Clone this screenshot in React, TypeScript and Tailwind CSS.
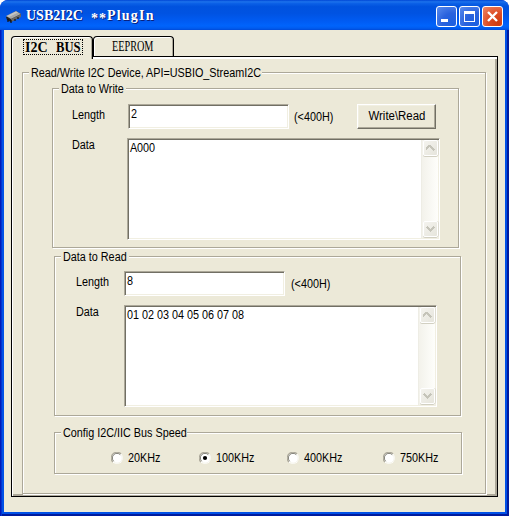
import type { ReactNode } from 'react'

const etched =
  'border border-[#aca899] shadow-[inset_1px_1px_0_#fff,1px_1px_0_#fff] flex flex-col items-start'

function Txt({ children, className = '' }: { children: ReactNode; className?: string }) {
  return (
    <span className={`block origin-left scale-x-90 whitespace-pre leading-[14px] ${className}`}>
      {children}
    </span>
  )
}

function Legend({ children, className }: { children: ReactNode; className: string }) {
  return (
    <div className={`relative -mt-[7px] ml-[6px] h-[14px] shrink-0 bg-[#ece9d8] pl-[2px] ${className}`}>
      <Txt>{children}</Txt>
    </div>
  )
}

const sunken =
  'bg-white border border-t-[#aca899] border-l-[#aca899] border-r-white border-b-white shadow-[inset_1px_1px_0_#716f64,inset_-1px_-1px_0_#f1efe2]'

function Field({ value }: { value: string }) {
  return (
    <div className={`h-[25px] w-[161px] shrink-0 pl-[2px] pt-[2px] ${sunken}`}>
      <Txt>{value}</Txt>
    </div>
  )
}

function ScrollButton({ up = false }: { up?: boolean }) {
  return (
    <div className="flex h-[16px] w-[15px] items-center justify-center rounded-[2px] border border-white bg-gradient-to-br from-[#f4f3ee] to-[#e6e5dc] shadow-[0_1px_0_#d2d0c2,1px_0_0_#dddbd0]">
      <svg width="9" height="6" viewBox="0 0 9 6" shapeRendering="crispEdges">
        <path
          d={up ? 'M4 0h1v1h1v1h1v1h1v1h1v1h-1v1h-1v-1h-1v-1h-1v-1h-1v-1h-1v1h-1v1h-1v1h-1v-1h-1v-1h1v-1h1v-1h1v-1h1z' : 'M1 0h1v1h1v1h1v1h1v-1h1v-1h1v-1h1v1h1v1h-1v1h-1v1h-1v1h-1v1h-1v-1h-1v-1h-1v-1h-1v-1h-1v-1h1z'}
          fill="#c5c4b9"
        />
      </svg>
    </div>
  )
}

function TextArea({ value, className }: { value: string; className: string }) {
  return (
    <div className={`flex w-[313px] shrink-0 justify-between p-px ${className} ${sunken}`}>
      <Txt className="pl-px pt-px">{value}</Txt>
      <div className="flex w-[17px] flex-col items-center justify-between border-l border-[#eeede5] bg-gradient-to-r from-[#f3f2eb] to-[#fefefb] pb-px">
        <ScrollButton up />
        <ScrollButton />
      </div>
    </div>
  )
}

function Radio({ label, checked = false, className = '' }: { label: string; checked?: boolean; className?: string }) {
  return (
    <div className={`flex shrink-0 ${className}`}>
      <svg className="mt-px" width="12" height="12" viewBox="0 0 12 12">
        <circle cx="6" cy="6" r="5.9" fill="#fff" />
        <path d="M1.9 10.1A5.6 5.6 0 0 1 10.1 1.9" fill="none" stroke="#aca899" strokeWidth="1.1" />
        <path d="M2.7 9.3A4.6 4.6 0 0 1 9.3 2.7" fill="none" stroke="#716f64" strokeWidth="0.9" />
        <path d="M9.7 2.7A4.9 4.9 0 0 1 2.7 9.7" fill="none" stroke="#f1efe2" strokeWidth="0.7" />
        {checked && <circle cx="6" cy="6" r="2.1" fill="#000" />}
      </svg>
      <Txt className="ml-[5px]">{label}</Txt>
    </div>
  )
}

const caption = 'flex h-[21px] w-[21px] items-center justify-center rounded-[3px] border border-white'

export default function App() {
  return (
    <div className="h-[516px] w-[509px] overflow-hidden bg-white font-['Liberation_Sans',Arial,sans-serif] text-[12px] text-black">
      <div className="flex h-full flex-col overflow-hidden rounded-t-[8px] bg-[#0831d9]">
        <div className="flex h-[30px] shrink-0 items-start bg-[linear-gradient(180deg,#0046d5_0%,#1c72ec_6%,#0a5fe6_12%,#0052de_22%,#0053e2_45%,#005cf4_72%,#0064fc_86%,#005cf0_94%,#004ad8_100%)] pl-[6px] pt-[6px]">
          <svg className="mt-[4px]" width="16" height="14" viewBox="0 0 16 14">
            <path d="M0 7L10 1L15 4V6L5 12L1 10Z" fill="#222" />
            <path d="M0 6L10 1L15 4L5 9Z" fill="#a8a8a8" />
            <path d="M1 6L10 1.5L12 2.5L3 7Z" fill="#c4c4c4" />
            <path d="M5 9L15 4V7L5 12Z" fill="#666" />
            <path d="M2 9v3M5 10v3M9 9v2M12 7v2" stroke="#111" strokeWidth="1.2" />
          </svg>
          <div className="ml-[4px] mt-[2px] flex font-['Liberation_Serif',serif] text-[14px] font-bold leading-[16px] text-white [text-shadow:1px_1px_0_#0a1f7a]">
            <span className="w-[65px]">USB2I2C</span>
            <span className="mt-[3px] w-[16px] tracking-[1px]">**</span>
            <span className="tracking-[1.2px]">PlugIn</span>
          </div>
          <div className="ml-auto mr-[6px] flex gap-[2px]">
            <div className={`${caption} bg-[radial-gradient(circle_at_80%_85%,#1c5fe0,#2a62dd_45%,#5a8cee)]`}>
              <svg width="19" height="19" viewBox="0 0 19 19"><path d="M4 12h7v3h-7z" fill="#fff" /></svg>
            </div>
            <div className={`${caption} bg-[radial-gradient(circle_at_80%_85%,#1c5fe0,#2a62dd_45%,#5a8cee)]`}>
              <svg width="19" height="19" viewBox="0 0 19 19" shapeRendering="crispEdges"><path d="M4 4h11v11h-11zM5 7v7h9v-7z" fill="#fff" fillRule="evenodd" /></svg>
            </div>
            <div className={`${caption} bg-[radial-gradient(circle_at_80%_85%,#d03c10,#dd4d25_45%,#ee8868)]`}>
              <svg width="19" height="19" viewBox="0 0 19 19"><path d="M5 5L14 14M14 5L5 14" stroke="#fff" strokeWidth="2.4" /></svg>
            </div>
          </div>
        </div>

        <div className="flex min-h-0 flex-1 bg-[#0050e6] px-[4px] pb-[4px] shadow-[inset_1px_0_0_#0019b8,inset_2px_0_0_#0034d0,inset_-2px_-2px_0_#001a9c]">
          <div className="flex flex-1 flex-col bg-[#ece9d8] pl-[7px] pt-[6px]">
            <div className="flex h-[20px] shrink-0 font-['Liberation_Serif',serif]">
              <div className="relative z-10 h-[23px] w-[82px] rounded-t-[4px] border border-b-0 border-black bg-[#ece9d8] pl-[11px] pt-[2px] shadow-[inset_1px_1px_0_#fff,inset_-1px_0_0_#aca899]">
                <div className="flex h-[16px] w-[60px] border border-dotted border-black pl-px text-[14px] font-bold leading-[15px]">
                  <span className="w-[31px]">I2C</span>
                  <span className="block w-[24px] origin-left scale-x-90">BUS</span>
                </div>
              </div>
              <div className="h-[20px] w-[81px] rounded-t-[4px] border border-b-0 border-black pl-[18px] pt-[2px] shadow-[inset_1px_1px_0_#fff,inset_-1px_0_0_#aca899]">
                <span className="block origin-left scale-x-[0.73] text-[14px] leading-[16px]">EEPROM</span>
              </div>
            </div>

            <div className="h-[441px] w-[487px] shrink-0 border border-black pl-[10px] pt-[15px] shadow-[inset_1px_2px_0_#fff,inset_-2px_-2px_0_#aca899]">
              <div className={`h-[422px] w-[464px] ${etched}`}>
                <Legend className="w-[233px]">Read/Write I2C Device, API=USBIO_StreamI2C</Legend>

                <div className={`ml-[29px] mt-[8px] h-[160px] w-[407px] shrink-0 ${etched}`}>
                  <Legend className="w-[67px]">Data to Write</Legend>
                  <div className="mt-[8px] flex items-start pl-[19px]">
                    <div className="w-[56px] pt-[4px]"><Txt>Length</Txt></div>
                    <Field value="2" />
                    <div className="ml-[5px] w-[63px] pt-[6px]"><Txt>{'(<400H)'}</Txt></div>
                    <div className="flex h-[25px] w-[79px] justify-center border border-b-[#716f64] border-l-white border-r-[#716f64] border-t-white pt-[4px] shadow-[inset_-1px_-1px_0_#aca899,inset_1px_1px_0_#f1efe2]">
                      <span className="block scale-x-95 leading-[14px]">Write\Read</span>
                    </div>
                  </div>
                  <div className="mt-[9px] flex items-start pl-[19px]">
                    <div className="w-[55px]"><Txt>Data</Txt></div>
                    <TextArea value="A000" className="h-[102px]" />
                  </div>
                </div>

                <div className={`ml-[31px] mt-[8px] h-[160px] w-[407px] shrink-0 ${etched}`}>
                  <Legend className="w-[68px]">Data to Read</Legend>
                  <div className="mt-[7px] flex items-start pl-[21px]">
                    <div className="w-[48px] pt-[4px]"><Txt>Length</Txt></div>
                    <Field value="8" />
                    <div className="ml-[6px] pt-[6px]"><Txt>{'(<400H)'}</Txt></div>
                  </div>
                  <div className="mt-[9px] flex items-start pl-[21px]">
                    <div className="w-[48px]"><Txt>Data</Txt></div>
                    <TextArea value="01 02 03 04 05 06 07 08" className="h-[102px]" />
                  </div>
                </div>

                <div className={`ml-[31px] mt-[16px] h-[42px] w-[408px] shrink-0 ${etched}`}>
                  <Legend className="w-[126px]">Config I2C/IIC Bus Speed</Legend>
                  <div className="mt-[11px] flex pl-[56px]">
                    <Radio label="20KHz" className="w-[88px]" />
                    <Radio label="100KHz" checked className="w-[88px]" />
                    <Radio label="400KHz" className="w-[96px]" />
                    <Radio label="750KHz" />
                  </div>
                </div>
              </div>
            </div>
          </div>
        </div>
      </div>
    </div>
  )
}
